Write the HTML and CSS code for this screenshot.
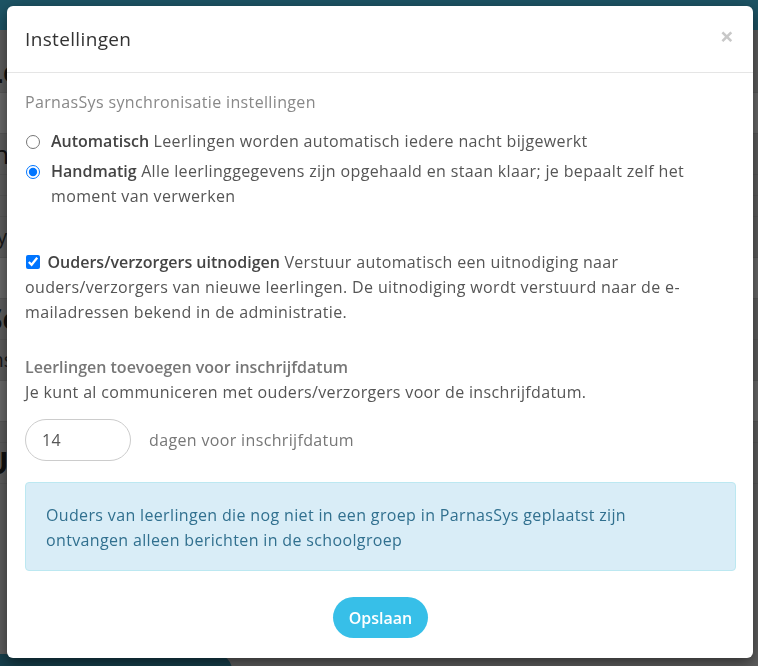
FILE: index.html
```html
<!DOCTYPE html>
<html lang="nl">
<head>
<meta charset="UTF-8">
<meta name="viewport" content="width=device-width, initial-scale=1.0">
<title>Instellingen</title>
<link rel="stylesheet" href="styles.css">
</head>
<body>

<div class="page">
    <div class="topbar"></div>
    <div class="rows">
        <div class="row big">Le</div>
        <div class="row band"></div>
        <div class="row mid">In</div>
        <div class="row line"></div>
        <div class="row line"></div>
        <div class="row small">Sy</div>
        <div class="row band"></div>
        <div class="row big">Se</div>
        <div class="row small">Ins</div>
        <div class="row band"></div>
        <div class="row line"></div>
        <div class="row big">Ui</div>
    </div>
    <div class="footbar"></div>
</div>

<div class="backdrop"></div>

<div class="modal">
    <div class="modal-header">
        <h4>Instellingen</h4>
        <span class="close">&times;</span>
    </div>

    <div class="modal-body">
        <p class="sync-title">ParnasSys synchronisatie instellingen</p>

        <label class="radio">
            <input type="radio" name="sync">
            <b>Automatisch</b> Leerlingen worden automatisch iedere nacht bijgewerkt
        </label>
        <label class="radio">
            <input type="radio" name="sync" checked>
            <b>Handmatig</b> Alle leerlinggegevens zijn opgehaald en staan klaar; je bepaalt zelf het moment van verwerken
        </label>

        <label class="check">
            <input type="checkbox" checked>
            <b>Ouders/verzorgers uitnodigen</b> Verstuur automatisch een uitnodiging naar ouders/verzorgers van nieuwe leerlingen. De uitnodiging wordt verstuurd naar de e-mailadressen bekend in de administratie.
        </label>

        <div class="before">
            <b>Leerlingen toevoegen voor inschrijfdatum</b>
            <p>Je kunt al communiceren met ouders/verzorgers voor de inschrijfdatum.</p>
        </div>

        <div class="days">
            <input type="text" value="14">
            <span>dagen voor inschrijfdatum</span>
        </div>

        <div class="alert">
            Ouders van leerlingen die nog niet in een groep in ParnasSys geplaatst zijn ontvangen alleen berichten in de schoolgroep
        </div>

        <div class="actions">
            <button>Opslaan</button>
        </div>
    </div>
</div>

</body>
</html>
```

FILE: styles.css
```css
body {
    margin: 0;
    font-family: "Open Sans", "Noto Sans", sans-serif;
    font-size: 16px;
    background-color: #bdbdbd;
    overflow: hidden;
    height: 666px;
}
.page {
    height: 666px;
    position: relative;
}
.topbar {
    height: 30px;
    background-color: #3aa8c9;
}
.rows {
    padding-top: 22px;
}
.row {
    height: 40px;
    border-bottom: 1px solid #b0b0b0;
    color: #222;
    font-size: 24px;
    line-height: 40px;
    margin-left: -14px;
}
.row.big {
    font-size: 30px;
    font-weight: bold;
}
.row.mid {
    font-size: 26px;
}
.row.small {
    font-size: 20px;
    color: #333;
}
.row.band {
    background-color: #d4d4d4;
}
.row.line {
    height: 20px;
}
.footbar {
    position: absolute;
    left: 0;
    bottom: -20px;
    width: 232px;
    height: 32px;
    background-color: #2d7e97;
    border-top-right-radius: 16px;
}
.backdrop {
    position: fixed;
    top: 0;
    left: 0;
    right: 0;
    bottom: 0;
    background-color: rgba(0, 0, 0, 0.5);
}
.modal {
    position: fixed;
    top: 6px;
    left: 7px;
    width: 746px;
    background-color: #fff;
    border-radius: 6px;
    box-shadow: 0 5px 15px rgba(0, 0, 0, 0.5);
    color: #555;
    letter-spacing: 0.35px;
}
.modal-header {
    height: 66px;
    border-bottom: 1px solid #e5e5e5;
    display: flex;
    align-items: center;
    justify-content: space-between;
    padding: 0 20px 0 18px;
}
.modal-header h4 {
    margin: 0;
    font-size: 19px;
    font-weight: normal;
    color: #333;
}
.close {
    font-size: 24px;
    font-weight: bold;
    color: #c8c8c8;
    line-height: 1;
    margin-top: -6px;
    margin-right: -1px;
}
.modal-body {
    padding: 17px 17px 20px 18px;
    line-height: 25px;
}
.sync-title {
    margin: 0 0 14px;
    color: #888;
}
.radio {
    display: block;
    padding-left: 26px;
    position: relative;
    margin-bottom: 5px;
}
.radio input {
    position: absolute;
    left: 0;
    top: 3px;
    width: 14px;
    height: 14px;
    margin: 3px 3px 0 1px;
}
b {
    color: #444;
    font-weight: 600;
    letter-spacing: 0;
}
.check {
    display: block;
    margin-top: 41px;
}
.check input {
    margin: 0 3px 0 1px;
    width: 14px;
    height: 14px;
    vertical-align: -1px;
}
.before {
    margin-top: 30px;
}
.before b {
    color: #777;
}
.before p {
    margin: 0;
}
.days {
    margin-top: 14px;
    display: flex;
    align-items: center;
    gap: 18px;
    color: #777;
}
.days input {
    width: 88px;
    height: 40px;
    padding: 0 0 0 16px;
    border: 1px solid #ccc;
    border-radius: 21px;
    font-family: inherit;
    font-size: 16px;
    letter-spacing: inherit;
    color: #555;
    outline: none;
}
.alert {
    margin-top: 21px;
    padding: 20px 60px 17px 20px;
    background-color: #d9edf7;
    border: 1px solid #bce8f1;
    border-radius: 4px;
    color: #31708f;
}
.actions {
    text-align: center;
    margin-top: 26px;
}
.actions button {
    height: 41px;
    padding: 0 16px;
    border: none;
    border-radius: 21px;
    background-color: #37bfe8;
    color: #fff;
    font-family: inherit;
    font-size: 16px;
    font-weight: 600;
}
```
